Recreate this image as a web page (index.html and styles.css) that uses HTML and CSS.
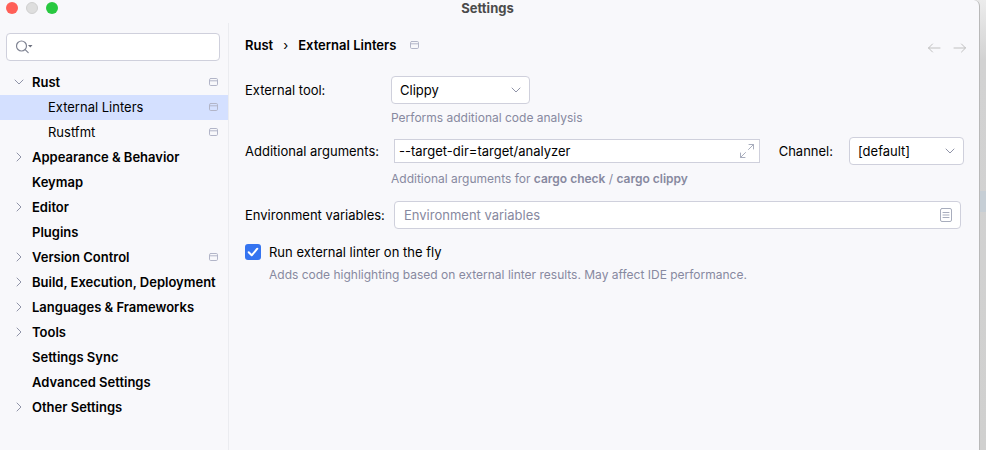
FILE: index.html
```
<!DOCTYPE html>
<html lang="en">
<head>
<meta charset="utf-8">
<title>Settings</title>
<link rel="stylesheet" href="styles.css">
</head>
<body>
<svg class="defs" aria-hidden="true">
  <symbol id="right" viewBox="0 0 16 16"><path d="M6 4l4 4-4 4"/></symbol>
  <symbol id="down" viewBox="0 0 16 16"><path d="M4 6l4 4 4-4"/></symbol>
  <symbol id="project" viewBox="0 0 16 16"><rect x="4.5" y="4.5" width="8" height="7" rx="1.2"/><path d="M4.5 6.800h8"/></symbol>
</svg>
<div class="window">
  <header class="titlebar">
    <div class="lights">
      <button class="light close" aria-label="Close"></button>
      <button class="light minimize" aria-label="Minimize"></button>
      <button class="light zoom" aria-label="Zoom"></button>
    </div>
    <h1>Settings</h1>
  </header>
  <div class="content">
    <nav class="sidebar">
      <div class="search">
        <svg class="search-icon" viewBox="0 0 18 16" aria-hidden="true"><circle cx="5.500" cy="7" r="5"/><path d="M9.200 10.700l3 3"/><path class="solid" d="M12 6h4.500l-2.250 2.500z"/></svg>
        <input type="search" aria-label="Search settings">
      </div>
      <ul class="tree">
        <li><a href="#"><svg class="icon"><use href="#down"/></svg><span>Rust</span><svg class="icon badge"><use href="#project"/></svg></a></li>
        <li class="child selected"><a href="#" aria-current="page"><span>External Linters</span><svg class="icon badge"><use href="#project"/></svg></a></li>
        <li class="child"><a href="#"><span>Rustfmt</span><svg class="icon badge"><use href="#project"/></svg></a></li>
        <li><a href="#"><svg class="icon"><use href="#right"/></svg><span>Appearance &amp; Behavior</span></a></li>
        <li><a href="#"><svg class="icon"></svg><span>Keymap</span></a></li>
        <li><a href="#"><svg class="icon"><use href="#right"/></svg><span>Editor</span></a></li>
        <li><a href="#"><svg class="icon"></svg><span>Plugins</span></a></li>
        <li><a href="#"><svg class="icon"><use href="#right"/></svg><span>Version Control</span><svg class="icon badge"><use href="#project"/></svg></a></li>
        <li><a href="#"><svg class="icon"><use href="#right"/></svg><span>Build, Execution, Deployment</span></a></li>
        <li><a href="#"><svg class="icon"><use href="#right"/></svg><span>Languages &amp; Frameworks</span></a></li>
        <li><a href="#"><svg class="icon"><use href="#right"/></svg><span>Tools</span></a></li>
        <li><a href="#"><svg class="icon"></svg><span>Settings Sync</span></a></li>
        <li><a href="#"><svg class="icon"></svg><span>Advanced Settings</span></a></li>
        <li><a href="#"><svg class="icon"><use href="#right"/></svg><span>Other Settings</span></a></li>
      </ul>
    </nav>
    <main class="page">
      <div class="page-head">
        <div class="crumbs"><a href="#">Rust</a><span class="separator">›</span><span>External Linters</span><svg class="icon badge"><use href="#project"/></svg></div>
        <div class="history">
          <button aria-label="Back"><svg class="icon" viewBox="0 0 16 16"><path d="M14 8H2.500M6.500 4l-4 4 4 4"/></svg></button>
          <button aria-label="Forward"><svg class="icon" viewBox="0 0 16 16"><path d="M2 8h11.500M9.500 4l4 4-4 4"/></svg></button>
        </div>
      </div>
      <form class="form">
        <label for="tool">External tool:</label>
        <div class="row">
          <div class="select tool"><select id="tool"><option>Clippy</option><option>Cargo Check</option></select><svg class="icon"><use href="#down"/></svg></div>
        </div>
        <p class="hint">Performs additional code analysis</p>
        <label for="args">Additional arguments:</label>
        <div class="row">
          <div class="field square"><input id="args" type="text" value="--target-dir=target/analyzer"><svg class="field-icon" viewBox="0 0 16 16" aria-hidden="true"><path d="M9.500 6.500l5-5M10 1.500h4.500V6M6.500 9.500l-5 5M1.500 10v4.500H6"/></svg></div>
          <label class="channel-label" for="channel">Channel:</label>
          <div class="select channel"><select id="channel"><option>[default]</option><option>stable</option><option>beta</option><option>nightly</option></select><svg class="icon"><use href="#down"/></svg></div>
        </div>
        <p class="hint">Additional arguments for <b>cargo check</b> / <b>cargo clippy</b></p>
        <label for="env">Environment variables:</label>
        <div class="row env-row">
          <div class="field"><input id="env" type="text" placeholder="Environment variables"><svg class="field-icon" viewBox="0 0 16 16" aria-hidden="true"><rect x="2.500" y="1.500" width="11" height="13" rx="1.500"/><path d="M5 5.500h6M5 8h6M5 10.500h6"/></svg></div>
        </div>
        <label class="check"><input type="checkbox" checked><svg class="tick" viewBox="0 0 16 16" aria-hidden="true"><path d="M3.700 8.300l3 3 5.600-6.600"/></svg>Run external linter on the fly</label>
        <p class="hint check-hint">Adds code highlighting based on external linter results. May affect IDE performance.</p>
      </form>
    </main>
  </div>
</div>
<div class="desktop"></div>
</body>
</html>
```
FILE: styles.css
```
* { box-sizing: border-box; }

body {
  margin: 0;
  min-height: 100vh;
  display: flex;
  background: #e8e8e8;
  color: #000;
  font: 13px/16px Inter, sans-serif;
}

a { color: inherit; text-decoration: none; }
button { border: 0; padding: 0; background: none; }
.defs { position: absolute; width: 0; height: 0; }

.window {
  flex: 1;
  min-width: 0;
  display: flex;
  flex-direction: column;
  background: #f8f8fb;
  border-right: 1px solid #b9b9b9;
  border-top-right-radius: 6px;
}

.desktop {
  width: 6px;
  background:
    linear-gradient(#c6ced5, #c6ced5) 0 191px / 100% 21px no-repeat,
    linear-gradient(#ececec, #d2d2d2 60px, #d0d0cf);
}

.titlebar {
  display: grid;
  grid-template-columns: 1fr auto 1fr;
  height: 23px;
  padding-right: 4px;
}
.titlebar h1 { margin: 0; font-size: 13px; font-weight: 700; color: #4b4b4b; }
.lights { display: flex; gap: 8px; padding: 2px 6px; }
.light { width: 12px; height: 12px; border-radius: 50%; }
.close { background: #ff5f57; }
.minimize { background: #dedede; border: 1px solid #d0d0d0; }
.zoom { background: #28c840; }

.content { flex: 1; display: flex; }

.sidebar { width: 229px; border-right: 1px solid #ebecf0; padding-top: 10px; }

.search {
  display: flex;
  align-items: center;
  height: 28px;
  margin: 0 8px 9px 6px;
  padding-left: 9px;
  background: #fff;
  border: 1px solid #cfd0dc;
  border-radius: 4px;
}
.search input { flex: 1; min-width: 0; border: 0; outline: 0; background: none; font: inherit; }

svg { flex: none; fill: none; stroke: #9094a8; stroke-width: 1; stroke-linecap: round; stroke-linejoin: round; }
.search-icon { width: 18px; height: 16px; stroke: #818594; stroke-width: 1.2; }
.solid { fill: #6c707e; stroke: none; }
.icon { width: 16px; height: 16px; }
.badge { stroke: #b2b5c8; }

.tree { list-style: none; margin: 0; padding: 0; font-weight: 600; }
.tree a { display: flex; align-items: center; height: 25px; padding: 0 7px 1px 11px; white-space: nowrap; }
.tree span { flex: 1; padding-left: 5px; }
.child { font-weight: 400; }
.tree .child a { padding-left: 43px; }
.selected { background: #d4e0ff; }

.page { flex: 1; min-width: 0; padding: 13px 15px 13px 16px; }
.page-head { display: flex; justify-content: space-between; height: 20px; margin-bottom: 20px; }
.crumbs { display: flex; align-items: center; gap: 10px; height: 18px; font-weight: 600; }
.separator { font-weight: 400; }
.history { display: flex; gap: 10px; padding-top: 4px; margin-right: -4px; }
.history button { height: 16px; }
.history svg { stroke: #c0c0c0; }

.form { display: grid; grid-template-columns: 146px 1fr; align-items: center; }
.row { display: flex; align-items: center; height: 28px; }

.hint { grid-column: 2; margin: 6px 0 11px; font-size: 12px; color: #8789a0; }
.hint b { font-weight: 600; }

.select { position: relative; height: 28px; }
.select select {
  appearance: none;
  width: 100%;
  height: 100%;
  padding: 0 24px 0 8px;
  border: 1px solid #cfd0dc;
  border-radius: 4px;
  background: #fff;
  color: #000;
  font: inherit;
}
.select .icon { position: absolute; right: 6px; top: 6px; pointer-events: none; }
.tool { width: 139px; }
.channel { width: 115px; }

.field {
  flex: 1;
  display: flex;
  align-items: center;
  height: 28px;
  margin-left: 3px;
  padding: 0 6px 0 9px;
  border: 1px solid #cfd0dc;
  border-radius: 4px;
  background: #fff;
}
.field input { flex: 1; min-width: 0; padding: 0; border: 0; outline: 0; background: none; color: #000; font: inherit; }
.field input::placeholder { color: #8789a0; opacity: 1; }
.field-icon { width: 16px; height: 16px; stroke: #a8adbd; }
.square { height: 24px; padding: 0 4px; border-radius: 0; }
.channel-label { margin: 0 16px 0 19px; }
.env-row { margin: 3px 3px 3px 0; }

.check { grid-column: 1 / -1; display: flex; align-items: center; gap: 8px; margin-top: 12px; }
.check input { appearance: none; width: 16px; height: 16px; margin: 0; border-radius: 3px; background: #3574f0; }
.tick { width: 16px; height: 16px; margin-left: -24px; stroke: #fff; stroke-width: 2; pointer-events: none; }
.check input:not(:checked) { background: #fff; border: 1px solid #cfd0dc; }
.check-hint { grid-column: 1 / -1; margin: 7px 0 0 24px; }
```
